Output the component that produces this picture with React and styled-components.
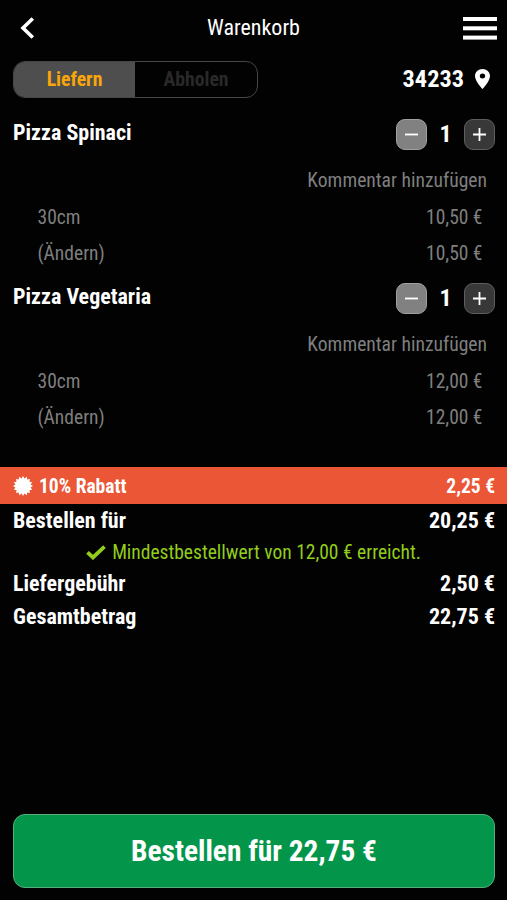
import { Fragment } from "react";
import styled, { createGlobalStyle } from "styled-components";

const colors = {
  background: "#020202",
  text: "#ffffff",
  muted: "#7f7f7f",
  accent: "#faa60a",
  discount: "#ea5636",
  success: "#92cd1c",
  order: "#03964a",
};

const GlobalStyle = createGlobalStyle`
  * {
    box-sizing: border-box;
  }

  body {
    margin: 0;
    background: ${colors.background};
    color: ${colors.text};
    font-family: "Roboto Condensed", Roboto, "Liberation Sans Narrow", sans-serif;
    font-stretch: 75%;
  }

  button {
    font: inherit;
    font-stretch: inherit;
    color: inherit;
    padding: 0;
    border: 0;
    background: none;
  }
`;

const Page = styled.div`
  width: 100%;
  height: 900px;
  display: flex;
  flex-direction: column;
  overflow: hidden;
  background: ${colors.background};
`;

const Header = styled.header`
  height: 56px;
  display: grid;
  grid-template-columns: 60px 1fr 60px;
  align-items: center;
`;

const Title = styled.h1`
  margin: 0;
  padding-bottom: 1px;
  text-align: center;
  font-size: 22px;
  font-weight: 450;
`;

const BackButton = styled.button`
  display: flex;
  padding-left: 20px;
`;

const MenuButton = styled.button`
  display: flex;
  justify-content: flex-end;
  padding-right: 10px;
`;

const DeliveryBar = styled.div`
  height: 46px;
  padding: 0 12px 0 13px;
  display: flex;
  align-items: center;
  justify-content: space-between;
`;

const Toggle = styled.div`
  width: 245px;
  height: 37px;
  display: grid;
  grid-template-columns: 121px 1fr;
  border: 1px solid #464646;
  border-radius: 12px;
  overflow: hidden;
`;

const ToggleOption = styled.button`
  font-size: 19.7px;
  font-weight: 700;
  color: ${({ $active }) => ($active ? colors.accent : "#292929")};
  background: ${({ $active }) => ($active ? "#4e4e4e" : "transparent")};
`;

const ZipCode = styled.div`
  display: flex;
  align-items: center;
  gap: 11px;
  padding: 0 5px 1px 0;
  line-height: 28px;
  font-size: 24.3px;
  font-weight: 700;
`;

const Item = styled.section`
  height: 164px;
  padding: 12px 12px 0 13px;
`;

const ItemHeader = styled.div`
  height: 40px;
  display: flex;
  align-items: center;
  justify-content: space-between;
`;

const ItemName = styled.h2`
  margin: 0 0 4px;
  font-size: 22px;
  font-weight: 700;
`;

const Stepper = styled.div`
  display: grid;
  grid-template-columns: 31px 37px 31px;
  align-items: center;
  text-align: center;
  font-size: 24px;
  font-weight: 700;
`;

const StepButton = styled.button`
  height: 31px;
  display: flex;
  align-items: center;
  justify-content: center;
  border: 1px solid ${({ $light }) => ($light ? "#a0a0a0" : "#5e5e5e")};
  border-radius: 9px;
  background: ${({ $light }) => ($light ? "#818181" : "#383838")};
`;

const Comment = styled.div`
  height: 46px;
  padding-right: 8px;
  line-height: 53px;
  text-align: right;
  font-size: 19.6px;
  color: ${colors.muted};
`;

const Detail = styled.div`
  height: 35.5px;
  line-height: 35.5px;
  padding: 0 12.5px 0 24.5px;
  display: flex;
  justify-content: space-between;
  font-size: 19.5px;
  color: ${colors.muted};
`;

const Discount = styled.div`
  height: 37px;
  margin-top: 37px;
  padding: 0 12px 0 13px;
  display: flex;
  align-items: center;
  gap: 6px;
  background: ${colors.discount};
  line-height: 23px;
  font-size: 19.5px;
  font-weight: 700;
`;

const DiscountText = styled.span`
  padding-top: 2px;

  &:last-child {
    margin-left: auto;
  }
`;

const TotalRow = styled.div`
  height: 33px;
  padding: 0 12px 0 13px;
  display: flex;
  align-items: center;
  justify-content: space-between;
  font-size: 22px;
  font-weight: 700;
`;

const MinimumNotice = styled.div`
  height: 30px;
  padding-top: 1px;
  display: flex;
  align-items: center;
  justify-content: center;
  gap: 6px;
  font-size: 19.5px;
  color: ${colors.success};
`;

const OrderButton = styled.button`
  && {
    height: 74px;
    margin: auto 12px 12px 13px;
    border: 1px solid #57ad7c;
    border-radius: 12px;
    background: ${colors.order};
    font-size: 29.4px;
    font-weight: 700;
  }
`;

const BackIcon = () => (
  <svg width="15" height="22" viewBox="0 0 15 22" fill="none">
    <path d="M12.8 1.5 3 11l9.8 9.5" stroke="#fff" strokeWidth="3.6" />
  </svg>
);

const MenuIcon = () => (
  <svg width="34" height="23" viewBox="0 0 34 23" fill="#fff">
    <rect width="34" height="4" />
    <rect y="9.3" width="34" height="4" />
    <rect y="18.6" width="34" height="4" />
  </svg>
);

const PinIcon = () => (
  <svg width="15" height="20" viewBox="5 2 14 20" preserveAspectRatio="none" fill="#fff">
    <path d="M12 2C8.13 2 5 5.13 5 9c0 5.25 7 13 7 13s7-7.75 7-13c0-3.87-3.13-7-7-7zm0 9.5a2.5 2.5 0 1 1 0-5 2.5 2.5 0 0 1 0 5z" />
  </svg>
);

const MinusIcon = () => (
  <svg width="13" height="13" viewBox="0 0 13 13" stroke="#fff" strokeWidth="1.8">
    <path d="M0 6.5h13" />
  </svg>
);

const PlusIcon = () => (
  <svg width="13" height="13" viewBox="0 0 13 13" stroke="#fff" strokeWidth="1.8">
    <path d="M0 6.5h13M6.5 0v13" />
  </svg>
);

const CheckIcon = () => (
  <svg width="20" height="15" viewBox="0 0 20 15" fill="none">
    <path d="M1.5 7.3 7 12.5 18.5 1.7" stroke={colors.success} strokeWidth="3.8" />
  </svg>
);

// 16-pointed seal
const sealPoints = Array.from({ length: 32 }, (_, i) => {
  const radius = i % 2 ? 7.7 : 10;
  const angle = (i * Math.PI) / 16;
  return `${10 + radius * Math.sin(angle)},${10 - radius * Math.cos(angle)}`;
}).join(" ");

const SealIcon = () => (
  <svg width="20" height="20" viewBox="0 0 20 20" fill="#fff">
    <polygon points={sealPoints} />
  </svg>
);

const items = [
  { name: "Pizza Spinaci", count: 1, price: "10,50 €" },
  { name: "Pizza Vegetaria", count: 1, price: "12,00 €" },
];

const CartItem = ({ name, count, price }) => (
  <Item>
    <ItemHeader>
      <ItemName>{name}</ItemName>
      <Stepper>
        <StepButton $light aria-label="Weniger">
          <MinusIcon />
        </StepButton>
        <span>{count}</span>
        <StepButton aria-label="Mehr">
          <PlusIcon />
        </StepButton>
      </Stepper>
    </ItemHeader>
    <Comment>Kommentar hinzufügen</Comment>
    {["30cm", "(Ändern)"].map((label) => (
      <Detail key={label}>
        <span>{label}</span>
        <span>{price}</span>
      </Detail>
    ))}
  </Item>
);

export default function App() {
  return (
    <Fragment>
      <GlobalStyle />
      <Page>
        <Header>
          <BackButton aria-label="Zurück">
            <BackIcon />
          </BackButton>
          <Title>Warenkorb</Title>
          <MenuButton aria-label="Menü">
            <MenuIcon />
          </MenuButton>
        </Header>

        <DeliveryBar>
          <Toggle>
            <ToggleOption $active>Liefern</ToggleOption>
            <ToggleOption>Abholen</ToggleOption>
          </Toggle>
          <ZipCode>
            34233
            <PinIcon />
          </ZipCode>
        </DeliveryBar>

        {items.map((item) => (
          <CartItem key={item.name} {...item} />
        ))}

        <Discount>
          <SealIcon />
          <DiscountText>10% Rabatt</DiscountText>
          <DiscountText>2,25 €</DiscountText>
        </Discount>
        <TotalRow>
          <span>Bestellen für</span>
          <span>20,25 €</span>
        </TotalRow>
        <MinimumNotice>
          <CheckIcon />
          Mindestbestellwert von 12,00 € erreicht.
        </MinimumNotice>
        <TotalRow>
          <span>Liefergebühr</span>
          <span>2,50 €</span>
        </TotalRow>
        <TotalRow>
          <span>Gesamtbetrag</span>
          <span>22,75 €</span>
        </TotalRow>

        <OrderButton>Bestellen für 22,75 €</OrderButton>
      </Page>
    </Fragment>
  );
}
